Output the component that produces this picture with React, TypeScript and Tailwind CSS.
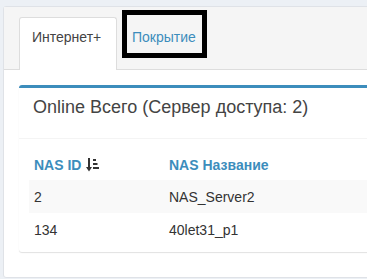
import React from 'react';

const rows = [
  { id: '2', name: 'NAS_Server2' },
  { id: '134', name: '40let31_p1' },
];

function SortIcon() {
  return (
    <svg width="13" height="14" viewBox="0 0 13 14" className="ml-[5px] inline-block" fill="#333">
      <rect x="2" y="0" width="2" height="10" />
      <polygon points="0,9 6,9 3,13.5" />
      <rect x="7" y="1" width="3" height="2" />
      <rect x="7" y="5" width="4.5" height="2" />
      <rect x="7" y="9" width="6" height="2" />
    </svg>
  );
}

export default function App() {
  return (
    <div className="w-[367px] h-[279px] overflow-hidden bg-[#ecf0f5] pl-[3px] pt-[6px] font-['Liberation_Sans',Arial,sans-serif]">
      <div className="w-[420px] rounded-[3px] border border-[#dfe2e7] bg-white">
        {/* tabs */}
        <div className="flex h-[63px] items-start border-b border-[#ddd] bg-[#f5f5f5] pl-[15px]">
          <div className="mt-[10px] h-[53px] w-[98px] rounded-t-[3px] border border-b-0 border-[#ddd] bg-white pl-[12px] pt-[9px] text-[14px] leading-[20px] text-[#444]">
            Интернет+
          </div>
          <div className="ml-[5px] mt-[3px] h-[48px] w-[85px] border-[5px] border-black pl-[5px] pt-[12px] text-[14px] leading-[20px] text-[#3c8dbc]">
            Покрытие
          </div>
        </div>

        {/* tab content */}
        <div className="pb-[25px] pl-[15px] pt-[15px]">
          <div className="rounded-[3px] border-t-[3px] border-[#3c8dbc] bg-white shadow-[0_1px_1px_rgba(0,0,0,0.12)]">
            <div className="h-[51px] border-b border-[#f4f4f4] pl-[14px] pt-[9px]">
              <h3 className="text-[18px] leading-[20px] text-[#444]">Online Всего (Сервер доступа: 2)</h3>
            </div>
            <div className="pb-[6px] pl-[10px] pt-[10px]">
              <table className="w-full border-collapse text-[14px] text-[#333]">
                <thead>
                  <tr className="h-[31px]">
                    <th className="w-[135px] pl-[5px] text-left align-middle font-bold leading-[20px] text-[#3c8dbc]">
                      <span className="inline-flex items-center">
                        NAS ID
                        <SortIcon />
                      </span>
                    </th>
                    <th className="pl-[5px] text-left align-middle font-bold leading-[20px] text-[#3c8dbc]">NAS Название</th>
                  </tr>
                </thead>
                <tbody>
                  {rows.map((r, i) => (
                    <tr key={r.id} className={`h-[33px] ${i % 2 === 0 ? 'bg-[#f9f9f9]' : 'bg-white'}`}>
                      <td className="pl-[5px] align-middle leading-[20px]">{r.id}</td>
                      <td className="pl-[5px] align-middle leading-[20px]">{r.name}</td>
                    </tr>
                  ))}
                </tbody>
              </table>
            </div>
          </div>
        </div>
      </div>
    </div>
  );
}
